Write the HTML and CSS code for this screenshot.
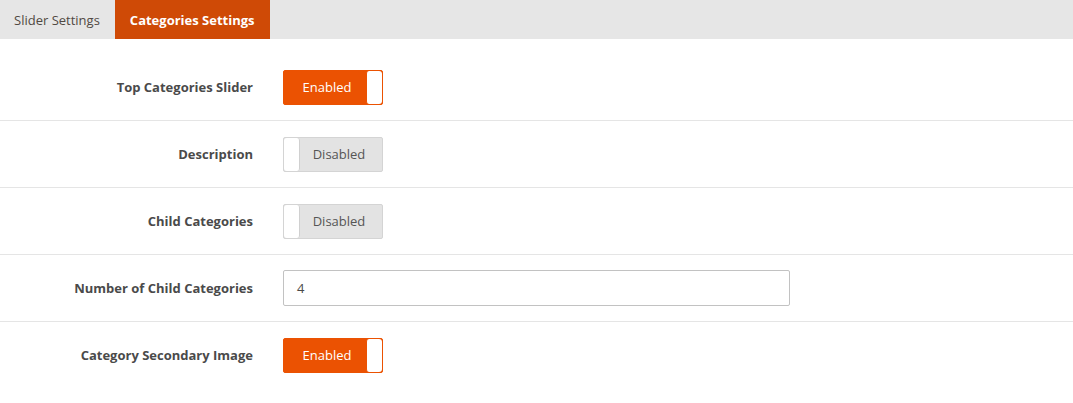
FILE: index.html
```html
<!DOCTYPE html>
<html>
<head>
<meta charset="utf-8">
<link rel="stylesheet" href="styles.css">
</head>
<body>
<div class="tabs">
  <div class="tab">Slider Settings</div>
  <div class="tab active">Categories Settings</div>
</div>
<div class="form">
  <div class="row">
    <div class="label">Top Categories Slider</div>
    <div class="control"><div class="toggle on"><span class="text">Enabled</span><span class="knob"></span></div></div>
  </div>
  <div class="row">
    <div class="label">Description</div>
    <div class="control"><div class="toggle off"><span class="knob"></span><span class="text">Disabled</span></div></div>
  </div>
  <div class="row">
    <div class="label">Child Categories</div>
    <div class="control"><div class="toggle off"><span class="knob"></span><span class="text">Disabled</span></div></div>
  </div>
  <div class="row">
    <div class="label">Number of Child Categories</div>
    <div class="control"><div class="input">4</div></div>
  </div>
  <div class="row last">
    <div class="label">Category Secondary Image</div>
    <div class="control"><div class="toggle on"><span class="text">Enabled</span><span class="knob"></span></div></div>
  </div>
</div>
</body>
</html>
```
FILE: styles.css
```css
html, body {
  margin: 0;
  padding: 0;
  background: #fff;
  font-family: "Open Sans", "Liberation Sans", sans-serif;
  font-size: 13px;
  color: #555;
}
.tabs {
  display: flex;
  height: 39px;
  background: #e6e6e6;
}
.tab {
  display: flex;
  align-items: center;
  padding: 0 15px 0 14px;
  color: #514943;
  font-size: 13px;
}
.tab.active {
  background: #cf4a06;
  color: #fff;
  font-weight: 700;
  padding: 0 15px;
  width: 125px;
}
.form {
  padding-top: 15px;
}
.row {
  display: flex;
  align-items: center;
  height: 66px;
  border-bottom: 1px solid #e5e5e5;
}
.row.last {
  border-bottom: none;
}
.label {
  width: 253px;
  text-align: right;
  font-weight: 700;
  color: #4a4a4a;
}
.control {
  margin-left: 30px;
}
.toggle {
  display: flex;
  width: 100px;
  height: 35px;
  box-sizing: border-box;
  border-radius: 2px;
  overflow: hidden;
}
.toggle .text {
  flex: 1;
  display: flex;
  align-items: center;
  justify-content: center;
}
.toggle .knob {
  width: 15px;
  background: #fff;
  border-radius: 3px;
}
.toggle.on {
  background: #eb5202;
  color: #fff;
  border: 1px solid #eb5202;
}
.toggle.on .text {
  padding-left: 4px;
}
.toggle.on .knob {
  border-left: 1px solid #eb5202;
}
.toggle.off {
  background: #e3e3e3;
  color: #555;
  border: 1px solid #d4d4d4;
}
.toggle.off .knob {
  border-right: 1px solid #d0d0d0;
}
.toggle.off .text {
  padding-right: 4px;
}
.input {
  width: 507px;
  height: 36px;
  box-sizing: border-box;
  border: 1px solid #c2c2c2;
  border-radius: 2px;
  padding: 0 13px;
  display: flex;
  align-items: center;
  color: #4a4a4a;
}
```
